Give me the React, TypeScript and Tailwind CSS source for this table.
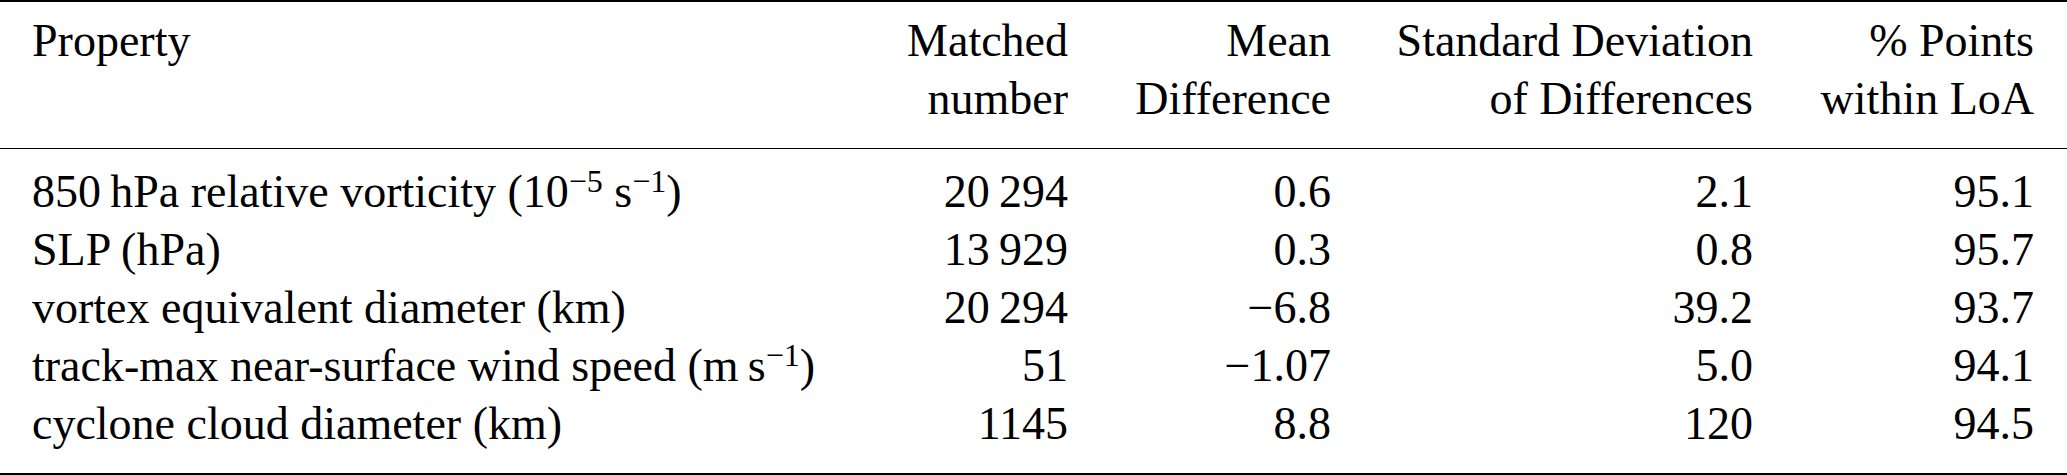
import React from "react";

const Sup = ({ children }: { children: React.ReactNode }) => (
  <span className="text-[32px] leading-[0] relative -top-[15px]">{children}</span>
);

type Row = { p: React.ReactNode; n: string; m: string; s: string; l: string };

const rows: Row[] = [
  {
    p: (
      <>
        850{"\u2009"}hPa relative vorticity (10<Sup>−5</Sup> s<Sup>−1</Sup>)
      </>
    ),
    n: "20\u2009294",
    m: "0.6",
    s: "2.1",
    l: "95.1",
  },
  { p: "SLP (hPa)", n: "13\u2009929", m: "0.3", s: "0.8", l: "95.7" },
  { p: "vortex equivalent diameter (km)", n: "20\u2009294", m: "−6.8", s: "39.2", l: "93.7" },
  {
    p: (
      <>
        track-max near-surface wind speed (m{"\u2009"}s<Sup>−1</Sup>)
      </>
    ),
    n: "51",
    m: "−1.07",
    s: "5.0",
    l: "94.1",
  },
  { p: "cyclone cloud diameter (km)", n: "1145", m: "8.8", s: "120", l: "94.5" },
];

const grid = "grid grid-cols-[872px_228px_264px_422px_281px]";

export default function App() {
  return (
    <div className="w-[2067px] h-[475px] bg-white text-black [font-family:'Liberation_Serif',serif] text-[46px] leading-[58px]">
      <div className="border-t-2 border-b-2 border-black">
        <div className={`${grid} pt-[10px] pb-[20px] border-b border-black`}>
          <div className="pl-[32px]">Property</div>
          <div className="pr-[32px] text-right">
            Matched
            <br />
            number
          </div>
          <div className="pr-[33px] text-right">
            Mean
            <br />
            Difference
          </div>
          <div className="pr-[33px] text-right">
            Standard Deviation
            <br />
            of Differences
          </div>
          <div className="pr-[33px] text-right">
            % Points
            <br />
            within LoA
          </div>
        </div>
        <div className="pt-[14px] pb-[20px]">
          {rows.map((r, i) => (
            <div key={i} className={grid}>
              <div className="pl-[32px] whitespace-nowrap">{r.p}</div>
              <div className="pr-[32px] text-right">{r.n}</div>
              <div className="pr-[33px] text-right">{r.m}</div>
              <div className="pr-[33px] text-right">{r.s}</div>
              <div className="pr-[33px] text-right">{r.l}</div>
            </div>
          ))}
        </div>
      </div>
    </div>
  );
}
